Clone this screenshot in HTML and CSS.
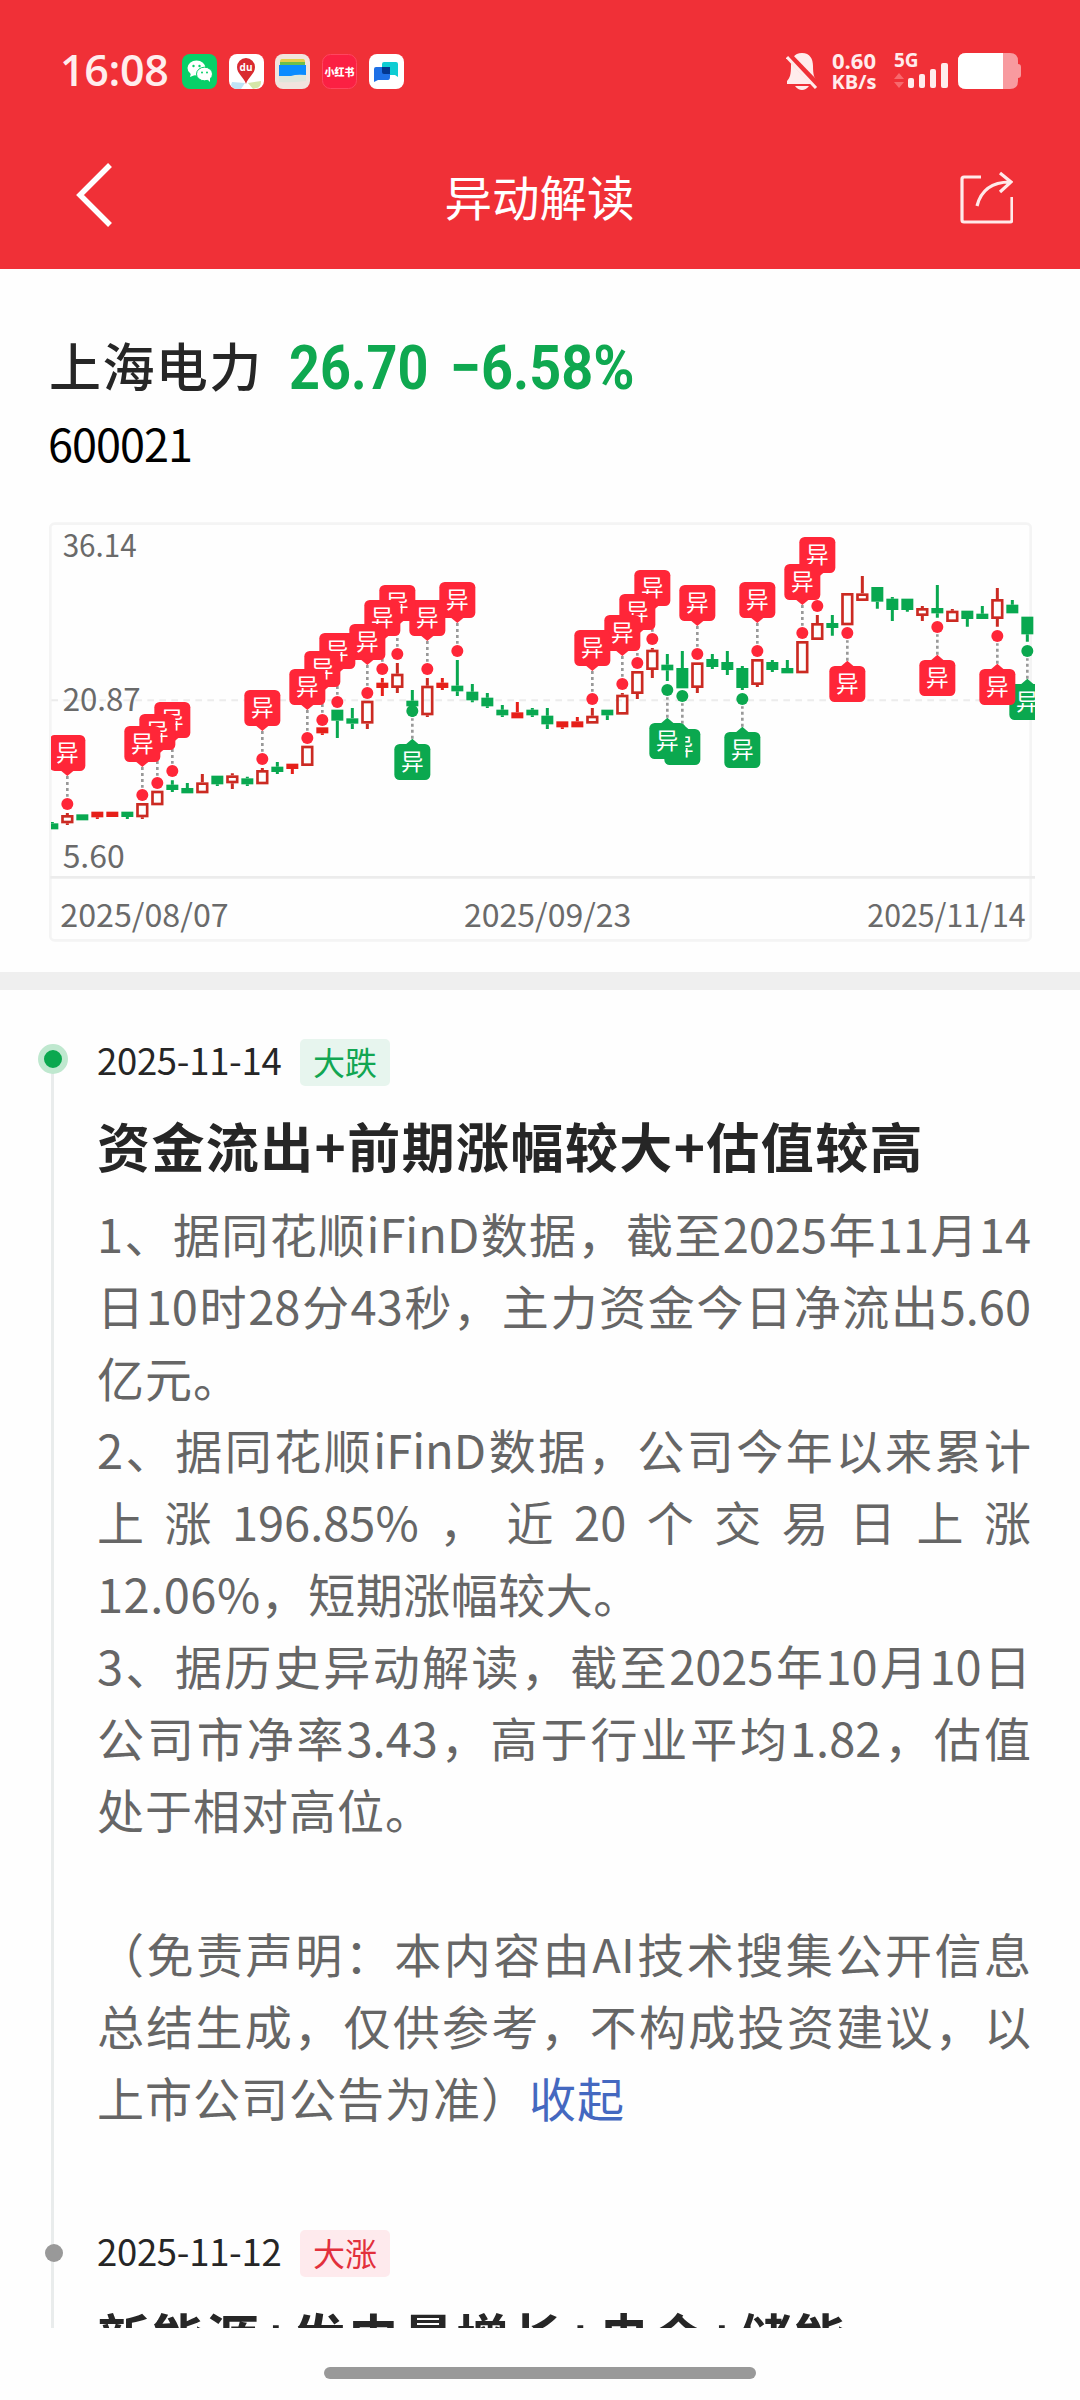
FILE: index.html
```html
<!DOCTYPE html>
<html lang="zh-CN">
<head>
    <meta charset="UTF-8">
    <meta name="viewport" content="width=device-width, initial-scale=1.0">
    <title>异动解读</title>
    <link rel="stylesheet" href="styles.css">
</head>
<body>
    <header>
        <!-- Status bar -->
        <div class="status">
            <div class="clock">16:08</div>
            <div class="apps">
                <svg class="app" viewBox="0 0 35 35">
                    <rect width="35" height="35" rx="8" fill="#07d068"/>
                    <ellipse cx="14.5" cy="14" rx="9" ry="7.5" fill="#fff"/>
                    <path d="M9 19l-1 4 5-2z" fill="#fff"/>
                    <ellipse cx="22.5" cy="20" rx="8" ry="6.8" fill="#fff" stroke="#07d068"/>
                    <path d="M25 25l3 3v-5z" fill="#fff"/>
                    <g fill="#07d068"><circle cx="11.5" cy="12" r="1.2"/><circle cx="17.5" cy="12" r="1.2"/><circle cx="20" cy="18.5" r="1"/><circle cx="25" cy="18.5" r="1"/></g>
                </svg>
                <svg class="app" viewBox="0 0 35 35">
                    <rect width="35" height="35" rx="8" fill="#fff"/>
                    <path d="M3 28l13 1-4 6H8q-4 0-6-4z" fill="#bfe3f5"/>
                    <path d="M19 29l13-2q0 6-4 7l-4 1z" fill="#d5e6a8"/>
                    <path d="M17 30C15 23 8 20 8 13a9 9 0 0 1 18 0c0 7-7 10-9 17z" fill="#d92b30"/>
                    <text x="17" y="17" class="du">du</text>
                </svg>
                <svg class="app" viewBox="0 0 35 35">
                    <rect width="35" height="35" rx="8" fill="#f1e4de"/>
                    <path d="M4 21h27v6q-14 2-27 1z" fill="#dfe6dc"/>
                    <path d="M7 5h21q2 0 2 3H5q0-3 2-3z" fill="#e5cf4a"/>
                    <rect x="5" y="8" width="25" height="4" fill="#6cc04a"/>
                    <path d="M4 11h27v10q-10-1-15 1H4z" fill="#0a8cff"/>
                </svg>
                <svg class="app" viewBox="0 0 35 35">
                    <rect x=".5" y=".5" width="34" height="34" rx="8" fill="#fb2043" stroke="#ff4560"/>
                    <text x="17.5" y="21.5" class="xhs">小红书</text>
                </svg>
                <svg class="app" viewBox="0 0 35 35">
                    <rect width="35" height="35" rx="8" fill="#fff"/>
                    <path d="M15 8h12q2 0 2 2v13l-3-2H15q-2 0-2-2v-9q0-2 2-2z" fill="#0fcdd3"/>
                    <path d="M7 13h14v10q0 3-2 3H9l-4 2V15q0-2 2-2z" fill="#1e70e6"/>
                    <path d="M13 13h8v7h-6q-2 0-2-2z" fill="#03378f"/>
                </svg>
            </div>
            <svg class="bell" viewBox="0 0 32 37">
                <path d="M16 0C8 0 5 6 5 13c0 8-1 12-4 15v3h30v-3c-3-3-4-7-4-15 0-7-3-13-11-13z" fill="#ffecec"/>
                <path d="M9 33h14q-3 4-7 4t-7-4z" fill="#ffecec"/>
                <path d="M2 2l30 31" stroke="#f03037" stroke-width="7"/>
                <path d="M1 4l29 31" stroke="#ffecec" stroke-width="3"/>
            </svg>
            <div class="speed">
                <span>0.60</span>
                <span>KB/s</span>
            </div>
            <div class="network">
                <span>5G</span>
                <svg viewBox="0 0 54 26">
                    <path d="M0 16l5-6 5 6zM0 19l5 6 5-6z" fill="#f7696d"/>
                    <g fill="#ffecec"><rect x="14" y="15" width="6" height="10" rx="2"/><rect x="25" y="11" width="6" height="14" rx="2"/><rect x="36" y="6" width="6" height="19" rx="2"/><rect x="47" y="0" width="7" height="25" rx="2"/></g>
                </svg>
            </div>
            <svg class="battery" viewBox="0 0 63 36">
                <path d="M8 0h44q8 0 8 8v3q3 0 3 3v8q0 3-3 3v3q0 8-8 8H8q-8 0-8-8V8q0-8 8-8z" fill="#f89a9f"/>
                <path d="M8 0h37v36H8q-8 0-8-8V8q0-8 8-8z" fill="#fff"/>
            </svg>
        </div>
        <!-- Title bar -->
        <div class="navbar">
            <svg class="back" viewBox="0 0 36 64"><path d="M34 2L4 32l30 30" fill="none" stroke="#fff" stroke-width="5.5"/></svg>
            <h1>异动解读</h1>
            <svg class="share" viewBox="0 0 54 54">
                <g fill="none" stroke="#ffeaea" stroke-width="3.2">
                    <path d="M22 6H5q-2 0-2 2v41q0 2 2 2h46q2 0 2-2V26"/>
                    <path d="M18 35q6-24 33-24M41 2l11 9-11 10"/>
                </g>
            </svg>
        </div>
    </header>
    <main>
        <section class="stock">
            <div class="quote">
                <span class="name">上海电力</span>
                <span class="price">26.70</span>
                <span class="change">−6.58%</span>
            </div>
            <div class="code">600021</div>
            <svg class="chart" viewBox="0 36 2964 1266"></svg>
        </section>
        <section class="timeline">
            <article class="item">
                <div class="rail"><i class="dot active"></i></div>
                <div class="detail">
                    <div class="meta"><time>2025-11-14</time><span class="tag down">大跌</span></div>
                    <h2>资金流出+前期涨幅较大+估值较高</h2>
                    <div class="text">
                        <p>1、据同花顺iFinD数据，截至2025年11月14</p>
                        <p>日10时28分43秒，主力资金今日净流出5.60</p>
                        <p class="end">亿元。</p>
                        <p>2、据同花顺iFinD数据，公司今年以来累计</p>
                        <p class="loose"><span>上</span><span>涨</span><span>196.85%</span><span>，</span><span>近</span><span>20</span><span>个</span><span>交</span><span>易</span><span>日</span><span>上</span><span>涨</span></p>
                        <p class="end narrow">12.06%，短期涨幅较大。</p>
                        <p>3、据历史异动解读，截至2025年10月10日</p>
                        <p>公司市净率3.43，高于行业平均1.82，估值</p>
                        <p class="end">处于相对高位。</p>
                        <p class="end">&nbsp;</p>
                        <p>（免责声明：本内容由AI技术搜集公开信息</p>
                        <p>总结生成，仅供参考，不构成投资建议，以</p>
                        <p class="end">上市公司公告为准）<a href="#">收起</a></p>
                    </div>
                </div>
            </article>
            <article class="item">
                <div class="rail"><i class="dot"></i></div>
                <div class="detail">
                    <div class="meta"><time>2025-11-12</time><span class="tag up">大涨</span></div>
                    <h2>新能源+发电量增长+央企+储能</h2>
                </div>
            </article>
        </section>
    </main>
    <footer><div class="home_bar"></div></footer>
    <script src="chart.js"></script>
</body>
</html>
```
FILE: styles.css
```css
* {
    margin: 0;
    padding: 0;
    box-sizing: border-box;
}
body {
    font-family: "Noto Sans CJK SC", "Noto Sans", sans-serif;
    background-color: #fefefe;
    color: #262626;
    width: 1080px;
    height: 2400px;
    overflow: hidden;
    display: flex;
    flex-direction: column;
}
header {
    background-color: #f03037;
    height: 269px;
    flex: none;
    color: #fff;
}
/* Status bar */
.status {
    display: flex;
    align-items: center;
    height: 142px;
    padding: 0 60px;
}
.clock {
    width: 122px;
    margin-top: -3px;
    font-family: "Open Sans", sans-serif;
    font-size: 43px;
    font-weight: 600;
    letter-spacing: -0.3px;
    color: #ffeded;
}
.apps {
    display: flex;
    gap: 11.7px;
    margin-right: auto;
}
.app {
    width: 35px;
    height: 35px;
}
.du {
    font: bold 10px "Open Sans", sans-serif;
    fill: #fff;
    text-anchor: middle;
}
.xhs {
    font: 900 10px "Noto Sans CJK SC", sans-serif;
    fill: #fff;
    text-anchor: middle;
}
.bell {
    width: 32px;
    height: 37px;
    margin-right: 13px;
}
.speed {
    display: flex;
    flex-direction: column;
    align-items: center;
    width: 46px;
    margin-right: 17px;
    font: bold 22px/22px "Open Sans", sans-serif;
    color: #ffecec;
}
.speed span + span {
    font-size: 20px;
}
.network {
    width: 54px;
    margin-right: 10px;
    font: bold 19px/14px "Open Sans", sans-serif;
    color: #ffecec;
}
.network span,
.network svg {
    display: block;
}
.network svg {
    margin-top: -4px;
    height: 26px;
}
.battery {
    width: 63px;
    height: 36px;
    margin-right: -1px;
}
/* Title bar */
.navbar {
    display: flex;
    align-items: center;
    justify-content: space-between;
    height: 110px;
    padding: 0 67px 0 76px;
}
.back {
    width: 36px;
    height: 64px;
    margin-top: -4px;
}
.navbar h1 {
    font-size: 47.5px;
    font-weight: 400;
    line-height: 60px;
    margin: -3px 0 0 8px;
}
.share {
    width: 54px;
    height: 54px;
    margin-top: 2px;
}
main {
    height: 2059px;
    overflow: hidden;
}
/* Stock summary */
.stock {
    height: 721px;
    padding: 62px 44px 0 48px;
    border-bottom: 18px solid #efefef;
}
.quote {
    display: flex;
    align-items: center;
    height: 70px;
    white-space: nowrap;
}
.name {
    width: 241px;
    margin-top: -4px;
    padding-left: 1px;
    font-size: 52px;
    letter-spacing: 1.4px;
    font-weight: 500;
}
.price,
.change {
    font-family: Roboto, sans-serif;
    font-size: 62px;
    font-weight: 700;
    color: #0fa850;
    transform: scaleX(0.87);
    transform-origin: left;
    margin-top: 2px;
}
.price {
    width: 161px;
}
.change {
    transform: scaleX(0.9);
}
.code {
    height: 87px;
    line-height: 84px;
    font-size: 45px;
    letter-spacing: -1px;
    color: #000;
}
.chart {
    display: block;
    width: 988px;
    height: 422px;
    margin-top: 34px;
}
.chart .label {
    font-family: "Noto Sans CJK SC", sans-serif;
    font-size: 94px;
    font-weight: 400;
    fill: #6a6a6a;
}
.chart .flag {
    font-family: "Noto Sans CJK SC", sans-serif;
    font-size: 68px;
    fill: #fff;
    text-anchor: middle;
}
/* Timeline */
.item {
    display: flex;
}
.rail {
    position: relative;
    width: 97px;
    flex: none;
}
.rail::before {
    content: "";
    position: absolute;
    left: 51px;
    top: 0;
    bottom: 0;
    width: 3px;
    background-color: #e9ecec;
}
.item:first-child .rail::before {
    top: 69px;
}
.dot {
    position: absolute;
    left: 45px;
    top: 63px;
    width: 18px;
    height: 18px;
    border-radius: 50%;
    background-color: #999;
}
.dot.active {
    left: 38px;
    top: 54px;
    width: 30px;
    height: 30px;
    border: 6px solid #bfe8cf;
    background-color: #0ba84f;
}
.detail {
    width: 934px;
    padding-top: 48px;
}
.meta {
    display: flex;
    align-items: center;
    height: 48px;
}
.meta time {
    width: 203px;
    margin-top: -5px;
    font-size: 36.5px;
    letter-spacing: -0.3px;
}
.tag {
    width: 90px;
    height: 47px;
    border-radius: 5px;
    text-align: center;
    font-size: 32px;
    line-height: 44px;
}
.tag.down {
    color: #12a652;
    background-color: #e7f5ee;
}
.tag.up {
    color: #e2303c;
    background-color: #feeaed;
}
.detail h2 {
    height: 111px;
    padding-top: 19px;
    font-size: 53px;
    font-weight: 700;
    line-height: 80px;
    letter-spacing: 1.4px;
    white-space: nowrap;
}
.text {
    height: 984px;
    color: #666;
}
.text p {
    height: 72px;
    font-size: 47px;
    line-height: 72px;
    white-space: nowrap;
    text-align: justify;
    text-align-last: justify;
}
.text p.end {
    text-align-last: left;
    letter-spacing: 1px;
}
.text p.narrow {
    letter-spacing: 0.5px;
}
.text p.loose {
    display: flex;
    justify-content: space-between;
}
.text a {
    color: #4468c0;
    text-decoration: none;
}
/* Gesture bar */
footer {
    display: flex;
    justify-content: center;
    padding-top: 39px;
}
.home_bar {
    width: 432px;
    height: 12px;
    border-radius: 6px;
    background-color: #999;
}
```
FILE: chart.js
```js
// [type, high, top, bottom, low]  u = hollow red, r = solid red, g = green
var candles = [
    ['g', 936, 940, 958, 958], ['u', 909, 915, 940, 945], ['g', 913, 913, 931, 931], ['r', 905, 905, 922, 927],
    ['r', 905, 905, 921, 921], ['g', 905, 905, 921, 927], ['u', 879, 879, 922, 927], ['u', 842, 842, 886, 886],
    ['g', 811, 824, 840, 846], ['g', 819, 834, 850, 850], ['u', 792, 817, 850, 850], ['g', 797, 797, 823, 828],
    ['u', 790, 796, 820, 837], ['g', 800, 805, 823, 828], ['u', 774, 780, 823, 823], ['g', 756, 770, 786, 792],
    ['r', 761, 761, 777, 792], ['u', 707, 707, 768, 768], ['r', 652, 652, 670, 675], ['g', 599, 599, 632, 684],
    ['g', 594, 625, 641, 657], ['u', 572, 572, 641, 657], ['r', 504, 518, 534, 558], ['u', 459, 491, 534, 549],
    ['g', 540, 572, 589, 620], ['u', 504, 527, 616, 621], ['r', 504, 518, 534, 540], ['g', 450, 527, 544, 558],
    ['g', 522, 545, 571, 577], ['g', 549, 563, 589, 594], ['g', 585, 599, 616, 621], ['r', 576, 607, 625, 625],
    ['g', 594, 599, 616, 621], ['g', 594, 617, 643, 657], ['r', 634, 634, 652, 657], ['r', 621, 634, 652, 652],
    ['u', 594, 617, 641, 641], ['g', 599, 599, 616, 630], ['u', 549, 554, 614, 614], ['u', 483, 483, 552, 567],
    ['u', 414, 419, 480, 504], ['g', 432, 464, 481, 513], ['g', 423, 474, 535, 535], ['u', 457, 457, 534, 549],
    ['g', 432, 447, 471, 477], ['g', 423, 456, 480, 495], ['g', 468, 474, 534, 540], ['u', 447, 447, 525, 531],
    ['g', 450, 456, 480, 486], ['g', 450, 474, 490, 490], ['u', 393, 393, 490, 490], ['u', 315, 339, 390, 390],
    ['g', 315, 339, 354, 377], ['u', 249, 249, 346, 346], ['u', 198, 250, 273, 273], ['g', 231, 231, 275, 296],
    ['g', 261, 266, 300, 333], ['g', 266, 266, 300, 305], ['u', 288, 294, 318, 333], ['g', 225, 294, 310, 323],
    ['u', 297, 302, 336, 336], ['g', 302, 302, 327, 350], ['g', 288, 311, 327, 327], ['u', 234, 267, 327, 350],
    ['g', 270, 284, 310, 310], ['g', 320, 320, 373, 395]
];
// [candle index, dot y, color, flag below the candle]
var markers = [
    [1, 882, 'r'], [6, 855, 'r'], [7, 819, 'r'], [8, 783, 'r'], [14, 747, 'r'], [17, 684, 'r'], [18, 630, 'r'],
    [19, 576, 'r'], [21, 549, 'r'], [22, 477, 'r'], [23, 432, 'r'], [24, 603, 'g', true], [25, 477, 'r'],
    [27, 423, 'r'], [36, 567, 'r'], [38, 522, 'r'], [39, 459, 'r'], [40, 387, 'r'], [41, 540, 'g', true],
    [42, 558, 'g', true], [43, 432, 'r'], [46, 567, 'g', true], [47, 423, 'r'], [50, 369, 'r'], [51, 288, 'r'],
    [53, 369, 'r', true], [59, 351, 'r', true], [63, 378, 'r', true], [65, 423, 'g', true]
];
var colors = { u: '#cb2a22', r: '#e61f19', g: '#08a850' };

function getX(i) {
    return 13 + i * 45;
}

// frame and grid
var html = '<clipPath id="area"><rect x="9" y="36" width="2952" height="1066"/></clipPath>' +
    '<rect x="7" y="41" width="2941" height="1250" rx="12" fill="none" stroke="#f4f4f4" stroke-width="8"/>' +
    '<path d="M7 1102H2961" stroke="#ececec" stroke-width="8"/>' +
    '<path d="M10 571H2948" stroke="#ececec" stroke-width="6" stroke-dasharray="20 16"/>';

function label(x, y, w, text) {
    html += '<text class="label" x="' + x + '" y="' + y + '" textLength="' + w + '" lengthAdjust="spacingAndGlyphs">' + text + '</text>';
}
label(44, 140, 222, '36.14');
label(44, 602, 234, '20.87');
label(44, 1073, 186, '5.60');
label(37, 1250, 505, '2025/08/07');
label(1248, 1250, 502, '2025/09/23');
label(2458, 1250, 475, '2025/11/14');

html += '<g clip-path="url(#area)">';
candles.forEach(function (c, i) {
    var x = getX(i), color = colors[c[0]];
    html += '<g stroke="' + color + '" stroke-width="9" fill="' + color + '">';
    html += '<path d="M' + x + ' ' + c[1] + 'V' + c[2] + 'M' + x + ' ' + c[3] + 'V' + c[4] + '"/>';
    if (c[0] === 'u') {
        html += '<rect x="' + (x - 14.5) + '" y="' + (c[2] + 4) + '" width="29" height="' + (c[3] - c[2] - 8) + '" fill="none" stroke-width="8"/>';
    } else {
        html += '<rect x="' + (x - 18) + '" y="' + c[2] + '" width="36" height="' + (c[3] - c[2]) + '" stroke="none"/>';
    }
    html += '</g>';
});

// the earliest flag stays on top
markers.slice().reverse().forEach(function (m) {
    var x = getX(m[0]), y = m[1];
    var color = m[2] === 'r' ? '#ff2638' : '#0ba84f';
    var top = m[3] ? y + 99 : y - 207;
    var tip = m[3] ? y + 83 : y - 84;
    var base = m[3] ? top + 1 : top + 107;
    html += '<path d="M' + x + ' ' + tip + 'V' + (m[3] ? y + 22 : y - 22) + '" stroke="#999" stroke-width="8" stroke-dasharray="9 9"/>' +
        '<rect x="' + (x - 54) + '" y="' + top + '" width="108" height="108" rx="16" fill="' + color + '"/>' +
        '<path d="M' + (x - 19) + ' ' + base + 'H' + (x + 19) + 'L' + x + ' ' + tip + 'z" fill="' + color + '"/>' +
        '<text class="flag" x="' + x + '" y="' + (top + 78) + '">异</text>';
});
markers.forEach(function (m) {
    html += '<circle cx="' + getX(m[0]) + '" cy="' + m[1] + '" r="18" fill="' + (m[2] === 'r' ? '#ff2638' : '#0ba84f') + '"/>';
});
html += '</g>';

document.querySelector('.chart').innerHTML = html;
```
